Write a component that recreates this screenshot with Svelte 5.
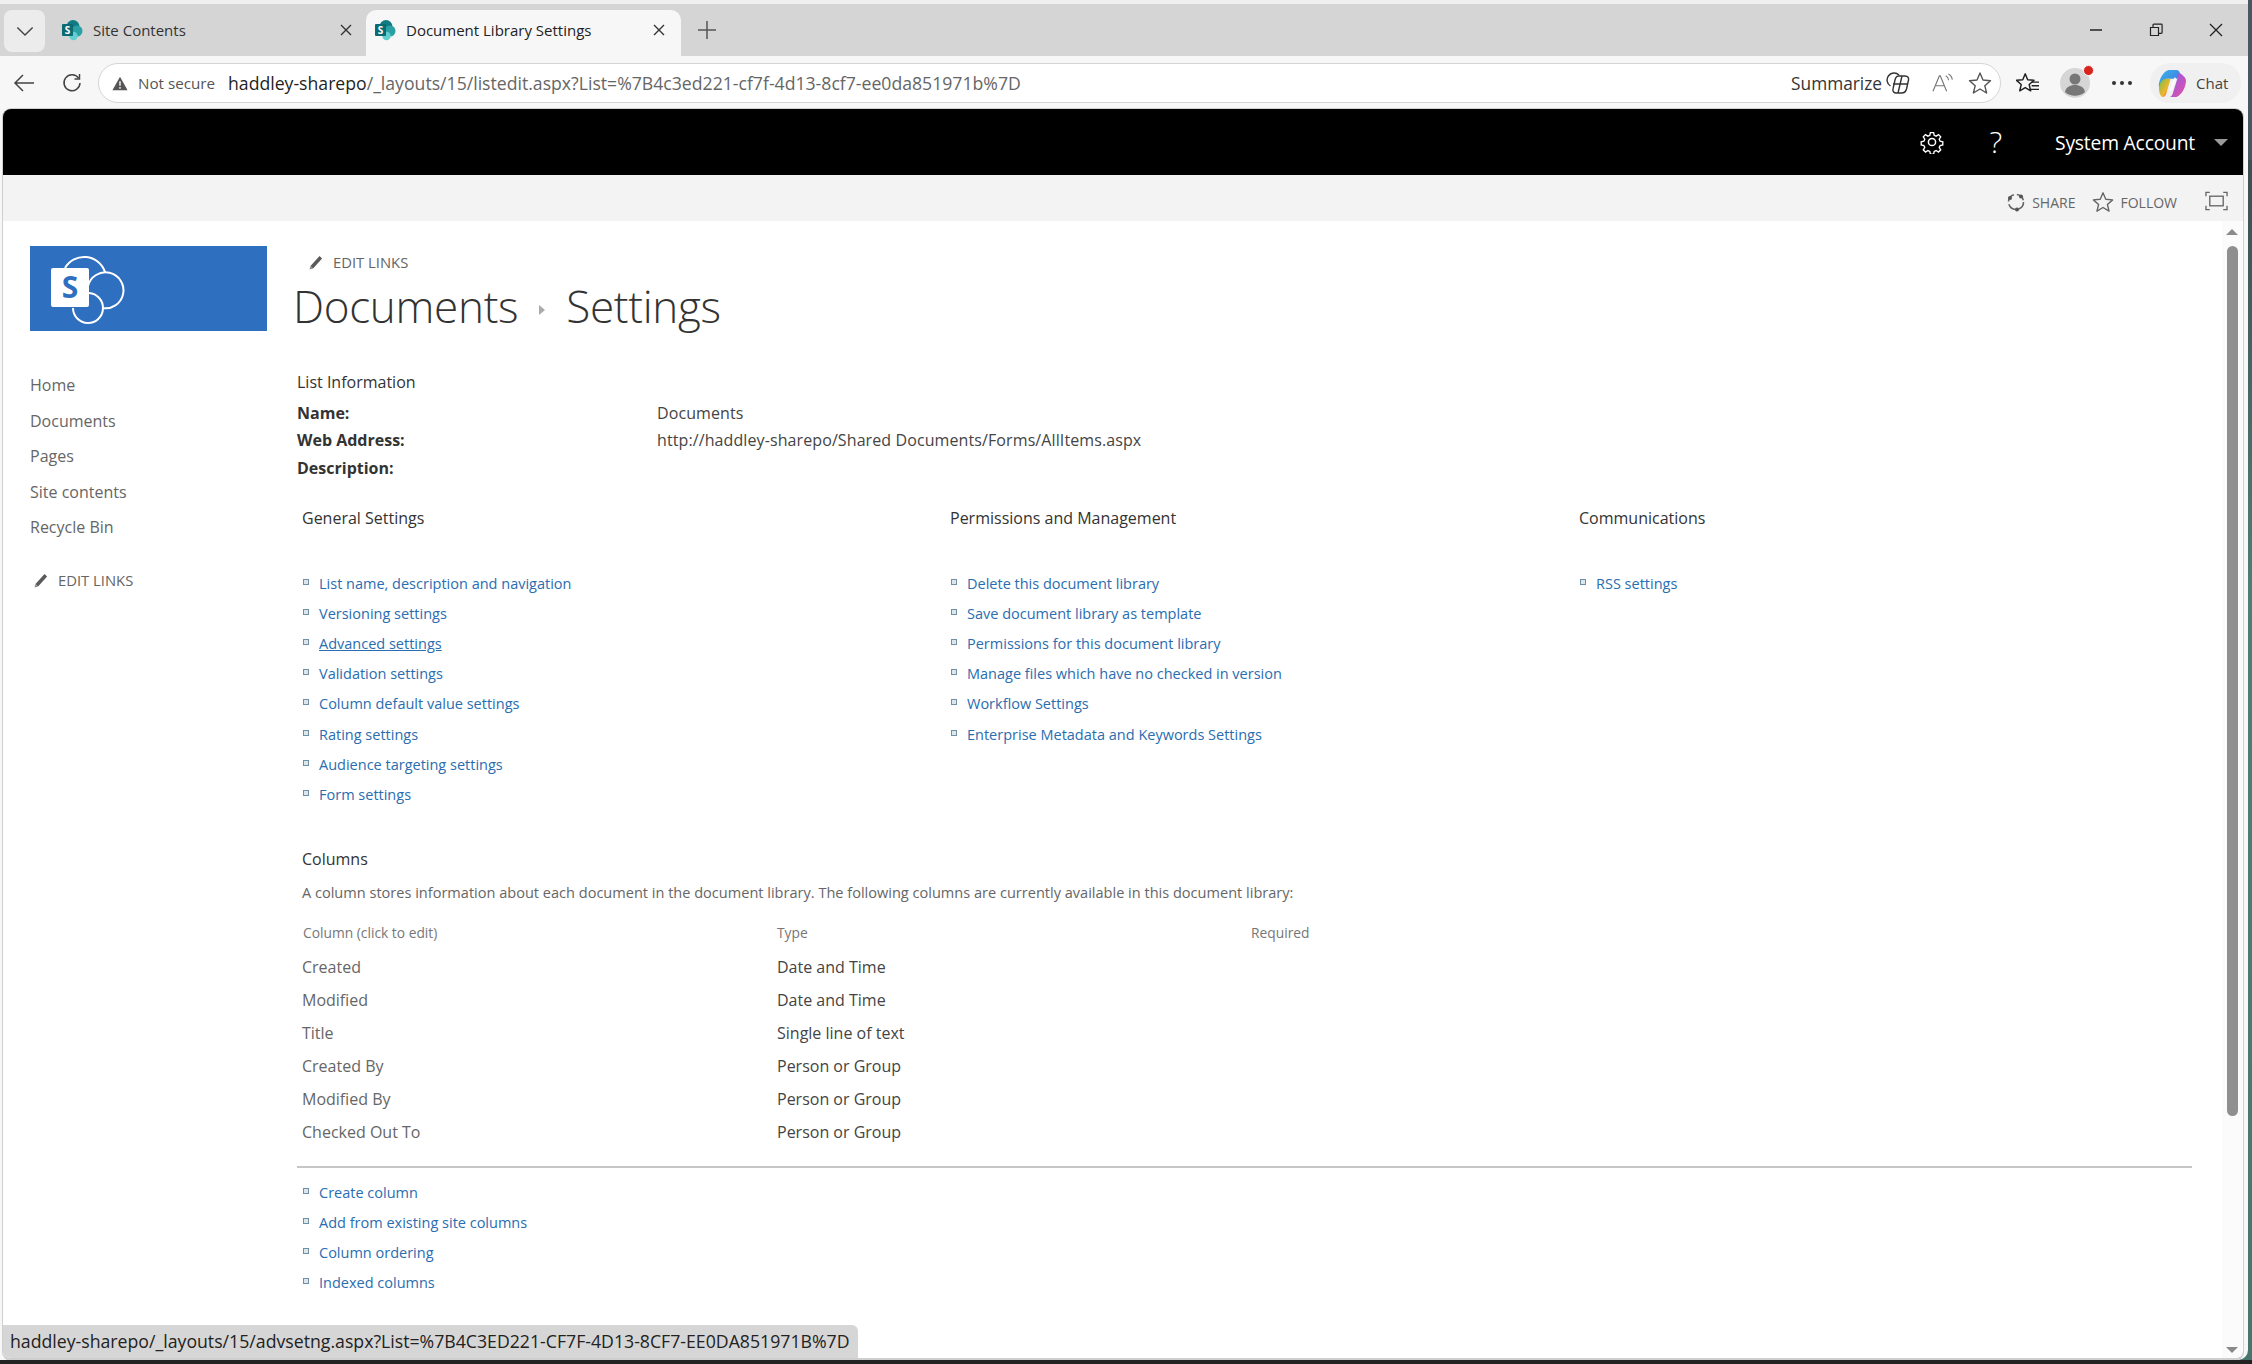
<script lang="ts">
  const navLinks = ['Home', 'Documents', 'Pages', 'Site contents', 'Recycle Bin'];

  const sections = [
    {
      title: 'General Settings',
      links: [
        'List name, description and navigation',
        'Versioning settings',
        'Advanced settings',
        'Validation settings',
        'Column default value settings',
        'Rating settings',
        'Audience targeting settings',
        'Form settings'
      ]
    },
    {
      title: 'Permissions and Management',
      links: [
        'Delete this document library',
        'Save document library as template',
        'Permissions for this document library',
        'Manage files which have no checked in version',
        'Workflow Settings',
        'Enterprise Metadata and Keywords Settings'
      ]
    },
    { title: 'Communications', links: ['RSS settings'] }
  ];

  const columns = [
    ['Created', 'Date and Time'],
    ['Modified', 'Date and Time'],
    ['Title', 'Single line of text'],
    ['Created By', 'Person or Group'],
    ['Modified By', 'Person or Group'],
    ['Checked Out To', 'Person or Group']
  ];

  const columnLinks = ['Create column', 'Add from existing site columns', 'Column ordering', 'Indexed columns'];
</script>

{#snippet favicon()}
  <svg class="favicon" viewBox="0 0 22 22" aria-hidden="true">
    <circle cx="12" cy="7.5" r="6.5" fill="#0f7b83" />
    <circle cx="16" cy="12" r="5.5" fill="#2aa0a4" />
    <circle cx="12.5" cy="17" r="4.2" fill="#5fcfd0" />
    <rect x="1" y="5" width="11" height="12" rx="1" fill="#0b6a72" />
    <text x="6.5" y="14.5" class="favicon__s">S</text>
  </svg>
{/snippet}

{#snippet pencil()}
  <svg class="pencil" viewBox="0 0 16 16" aria-hidden="true">
    <path d="M2.5 12l9-10 2.6 2.4-9 10z" fill="#5a5a5a" />
    <path d="M1.5 15.5l1-3.5 2.6 2.4z" fill="#8a8a8a" />
  </svg>
{/snippet}

{#snippet linkList(links: string[])}
  <ul class="links">
    {#each links as link}
      <li><a href="#top" class:hovered={link === 'Advanced settings'}>{link}</a></li>
    {/each}
  </ul>
{/snippet}

<div class="window">
  <header class="tabstrip">
    <button class="tabmenu" aria-label="Tab actions">
      <svg viewBox="0 0 20 12" width="18" height="11"><path d="M1.5 1.5L10 10l8.5-8.5" fill="none" stroke="#444" stroke-width="1.6" /></svg>
    </button>
    <div class="tab">
      {@render favicon()}
      <span class="tab__title">Site Contents</span>
      <svg class="tab__close" viewBox="0 0 12 12"><path d="M1 1l10 10M11 1L1 11" stroke="#333" stroke-width="1.4" /></svg>
    </div>
    <div class="tab tab--active">
      {@render favicon()}
      <span class="tab__title">Document Library Settings</span>
      <svg class="tab__close" viewBox="0 0 12 12"><path d="M1 1l10 10M11 1L1 11" stroke="#333" stroke-width="1.4" /></svg>
    </div>
    <svg class="newtab" viewBox="0 0 20 20"><path d="M10 1v18M1 10h18" stroke="#555" stroke-width="1.5" /></svg>
    <div class="winctl">
      <svg viewBox="0 0 14 14"><path d="M1 7h12" stroke="#222" stroke-width="1.4" /></svg>
      <svg viewBox="0 0 14 14"><path d="M1.5 4.5h8v8h-8z M4 4.5V2a.8.8 0 0 1 .8-.8h7.5a.8.8 0 0 1 .8.8v7.5a.8.8 0 0 1-.8.8H9.5" fill="none" stroke="#222" stroke-width="1.2" /></svg>
      <svg viewBox="0 0 14 14"><path d="M1 1l12 12M13 1L1 13" stroke="#222" stroke-width="1.3" /></svg>
    </div>
  </header>

  <div class="toolbar">
    <svg class="tool tool--back" viewBox="0 0 22 20"><path d="M21 10H2M10 2l-8 8 8 8" fill="none" stroke="#444" stroke-width="1.5" /></svg>
    <svg class="tool tool--reload" viewBox="0 0 20 20"><path d="M16.6 5.2A8 8 0 1 0 18 10" fill="none" stroke="#444" stroke-width="1.5" /><path d="M17.5 1v5h-5" fill="none" stroke="#444" stroke-width="1.5" /></svg>
    <div class="addressbar">
      <svg class="warn" viewBox="0 0 18 16"><path d="M9 0.5L17.5 15.5H0.5z" fill="#555" /><path d="M9 5.5v5M9 12v2" stroke="#f7f7f7" stroke-width="1.6" /></svg>
      <span class="notsecure">Not secure</span>
      <span class="url"><span class="url__host">haddley-sharepo</span>/_layouts/15/listedit.aspx?List=%7B4c3ed221-cf7f-4d13-8cf7-ee0da851971b%7D</span>
      <span class="summarize">Summarize</span>
      <svg class="addr-icon addr-icon--sum" viewBox="0 0 24 24"><g fill="none" stroke="#333" stroke-width="1.4"><path d="M4.5 15A7 7 0 1 1 13 4" /><path d="M12 5h7c3 0 4 2 3.5 4l-2 9c-.5 2-2 4-5 4h-5c-3 0-4-2-3.5-4l2-9c.5-2 1.5-4 3.5-4z" /><path d="M7 13h15M16 5l-4 17" /></g></svg>
      <svg class="addr-icon addr-icon--read" viewBox="0 0 24 22"><path d="M1 20L8 3h1l7 17M4 14h10" fill="none" stroke="#777" stroke-width="1.3" /><path d="M15 3c2 1 3 3 3.2 5M18 1c2.6 1.4 4 4 4.2 6.5" fill="none" stroke="#777" stroke-width="1.2" /></svg>
      <svg class="addr-icon addr-icon--star" viewBox="0 0 24 24"><path d="M12 2l3 7 7.5.7-5.7 5 1.8 7.3L12 18l-6.6 4 1.8-7.3-5.7-5L9 9z" fill="none" stroke="#555" stroke-width="1.4" stroke-linejoin="round" /></svg>
    </div>
    <svg class="tool tool--favs" viewBox="0 0 26 24"><path d="M10 2l2.6 6.5 6.9.6-5.2 4.6 1.6 6.8L10 17l-6 3.5 1.6-6.8L.5 9.1l6.8-.6z" fill="none" stroke="#222" stroke-width="1.6" stroke-linejoin="round" /><path d="M17 11h8M17 15h8M16 19h9" stroke="#222" stroke-width="1.5" /></svg>
    <div class="avatar">
      <svg viewBox="0 0 30 30"><circle cx="15" cy="15" r="15" fill="#d6d6d6" /><circle cx="15" cy="11" r="5.5" fill="#777" /><path d="M5 24c1-5 5-7 10-7s9 2 10 7a15 15 0 0 1-20 0z" fill="#777" /></svg>
      <span class="avatar__dot"></span>
    </div>
    <div class="dots"><i></i><i></i><i></i></div>
    <div class="chat">
      <svg viewBox="0 0 30 30">
        <defs>
          <linearGradient id="cpA" x1="0" y1="0" x2="1" y2="1"><stop offset="0" stop-color="#3bb6e8" /><stop offset="1" stop-color="#3f6fe0" /></linearGradient>
          <linearGradient id="cpB" x1="0" y1="0" x2="1" y2="1"><stop offset="0" stop-color="#6dc24b" /><stop offset="0.6" stop-color="#f2b52e" /><stop offset="1" stop-color="#e9483f" /></linearGradient>
          <linearGradient id="cpC" x1="0" y1="0" x2="1" y2="1"><stop offset="0" stop-color="#8a5cf0" /><stop offset="1" stop-color="#e64fa0" /></linearGradient>
        </defs>
        <path d="M11 1h8c2 0 3 1 3.6 3L20 10H9C7 10 2 17 1 19c-1-5 3-16 10-18z" fill="url(#cpA)" />
        <path d="M1 19c1-5 3-9 8-9h4l-4 14c-.5 3-2 5-4 5-3-1-4-5-4-10z" fill="url(#cpB)" />
        <path d="M22 4c3 2 7 5 7 8 0 6-4 15-10 17h-8c2 0 3-1 4-3l5-16c.5-3 1-6 2-6z" fill="url(#cpC)" />
        <path d="M18 9l-5 13" stroke="#fff" stroke-width="2" opacity="0.8" />
      </svg>
      <span>Chat</span>
    </div>
  </div>

  <div class="page">
    <div class="suitebar">
      <svg class="suite-gear" viewBox="0 0 24 24"><g fill="none" stroke="#fff" stroke-width="1.5"><circle cx="12" cy="12" r="3.6" /><path d="M10.2 1.5h3.6l.6 3 2.2 1 2.6-1.7 2.5 2.5-1.7 2.6 1 2.2 3 .6v3.6l-3 .6-1 2.2 1.7 2.6-2.5 2.5-2.6-1.7-2.2 1-.6 3h-3.6l-.6-3-2.2-1-2.6 1.7-2.5-2.5 1.7-2.6-1-2.2-3-.6v-3.6l3-.6 1-2.2-1.7-2.6 2.5-2.5 2.6 1.7 2.2-1z" transform="translate(1.2 1.2) scale(0.9)" /></g></svg>
      <span class="suite-help">?</span>
      <span class="suite-user">System Account</span>
      <span class="suite-caret"></span>
    </div>

    <div class="actionbar">
      <svg class="act-icon" viewBox="0 0 20 20"><circle cx="10" cy="10" r="7.5" fill="none" stroke="#666" stroke-width="1.6" stroke-dasharray="9 3" /><circle cx="4" cy="6" r="2" fill="#555" /><circle cx="15" cy="4.5" r="2" fill="#555" /><circle cx="11" cy="17.5" r="2" fill="#555" /></svg>
      <span class="act-label">SHARE</span>
      <svg class="act-icon act-icon--star" viewBox="0 0 24 24"><path d="M12 2l3 7 7.5.7-5.7 5 1.8 7.3L12 18l-6.6 4 1.8-7.3-5.7-5L9 9z" fill="none" stroke="#666" stroke-width="1.5" stroke-linejoin="round" /></svg>
      <span class="act-label">FOLLOW</span>
      <svg class="act-focus" viewBox="0 0 24 20"><path d="M1 5V1h4M19 1h4v4M23 15v4h-4M5 19H1v-4" fill="none" stroke="#666" stroke-width="1.4" /><rect x="5" y="5" width="14" height="10" fill="none" stroke="#666" stroke-width="1.4" /></svg>
    </div>

    <div class="body">
      <div class="scrollarea">
        <aside class="sidebar">
          <div class="logo">
            <svg viewBox="0 0 237 85" width="237" height="85">
              <g fill="none" stroke="#fff" stroke-width="2">
                <path d="M35 22A22 22 0 0 1 75 26" />
                <path d="M58 40A18 18 0 1 1 72 62" />
                <path d="M59 47A15 15 0 1 1 43 62" />
              </g>
              <rect x="21" y="22" width="38" height="39" rx="2" fill="#fff" />
              <text x="40" y="52" class="logo__s">S</text>
            </svg>
          </div>
          <nav class="quicklaunch">
            {#each navLinks as item}
              <span class="quicklaunch__item">{item}</span>
            {/each}
          </nav>
          <div class="editlinks editlinks--nav">{@render pencil()}<span>EDIT LINKS</span></div>
        </aside>

        <main class="main">
          <div class="editlinks editlinks--top">{@render pencil()}<span>EDIT LINKS</span></div>
          <h1 class="pagetitle">
            <span>Documents</span>
            <svg class="crumb" viewBox="0 0 6 10"><path d="M0 0l6 5-6 5z" fill="#aaa" /></svg>
            <span>Settings</span>
          </h1>

          <section class="info">
            <h2 class="info__title">List Information</h2>
            <dl class="info__grid">
              <dt>Name:</dt><dd>Documents</dd>
              <dt>Web Address:</dt><dd>http://haddley-sharepo/Shared Documents/Forms/AllItems.aspx</dd>
              <dt>Description:</dt><dd></dd>
            </dl>
          </section>

          <section class="settings">
            {#each sections as section}
              <div class="settings__col">
                <h3 class="heading">{section.title}</h3>
                {@render linkList(section.links)}
              </div>
            {/each}
          </section>

          <section class="cols">
            <h3 class="heading">Columns</h3>
            <p class="cols__desc">A column stores information about each document in the document library. The following columns are currently available in this document library:</p>
            <div class="cols__table">
              <div class="cols__head"><span>Column (click to edit)</span><span>Type</span><span>Required</span></div>
              {#each columns as [name, type]}
                <div class="cols__row"><span class="cols__name">{name}</span><span class="cols__type">{type}</span><span></span></div>
              {/each}
            </div>
          </section>

          <hr class="rule" />
          <div class="footlinks">{@render linkList(columnLinks)}</div>
        </main>
      </div>

      <div class="scrollbar">
        <span class="arrow arrow--up"></span>
        <span class="thumb"></span>
        <span class="arrow arrow--down"></span>
      </div>

      <div class="statusbubble">haddley-sharepo/_layouts/15/advsetng.aspx?List=%7B4C3ED221-CF7F-4D13-8CF7-EE0DA851971B%7D</div>
    </div>
  </div>
</div>

<style>
  :global(body) {
    margin: 0;
    background: linear-gradient(#4a5660 0 160px, #3e4d52 160px, #4f7f74 600px, #48756c 1360px, #222 1360px);
    height: 1364px;
    overflow: hidden;
    font-family: "Open Sans", "Liberation Sans", sans-serif;
  }

  .window {
    width: 2248px;
    height: 1360px;
    display: flex;
    flex-direction: column;
    background: #f7f7f7;
    border-top: 4px solid #efefef;
    box-sizing: border-box;
    border-bottom-right-radius: 10px;
    overflow: hidden;
  }

  /* browser chrome */
  .tabstrip {
    height: 52px;
    flex: none;
    display: flex;
    align-items: flex-end;
    background: #d5d5d5;
    position: relative;
  }
  .tabmenu {
    width: 41px;
    height: 42px;
    margin: 0 0 4px 4px;
    padding: 0;
    border: 0;
    border-radius: 8px;
    background: #ececec;
    display: flex;
    align-items: center;
    justify-content: center;
  }
  .tab {
    width: 315px;
    height: 46px;
    padding: 0 8px 6px 16px;
    box-sizing: border-box;
    display: flex;
    align-items: center;
    gap: 10px;
    font-size: 15px;
    color: #333;
    border-radius: 10px 10px 0 0;
  }
  .tab--active {
    background: #f7f7f7;
    margin-left: 6px;
    padding-left: 8px;
    padding-right: 16px;
    color: #222;
  }
  .tab__title {
    flex: 1;
    white-space: nowrap;
  }
  .tab__close {
    width: 12px;
    height: 12px;
    flex: none;
  }
  .favicon {
    width: 22px;
    height: 22px;
    flex: none;
  }
  .favicon__s {
    font: 700 10px "Open Sans", sans-serif;
    fill: #fff;
    text-anchor: middle;
  }
  .newtab {
    width: 20px;
    height: 20px;
    flex: none;
    margin: 0 0 16px 16px;
  }
  .winctl {
    margin-left: auto;
    height: 100%;
    display: flex;
    align-items: center;
    gap: 46px;
    padding: 0 25px 0 0;
  }
  .winctl svg {
    width: 14px;
    height: 14px;
  }

  .toolbar {
    height: 53px;
    flex: none;
    display: flex;
    align-items: center;
    background: #f7f7f7;
    padding: 1px 0 0 0;
    box-sizing: border-box;
  }
  .tool {
    flex: none;
  }
  .tool--back {
    width: 22px;
    height: 20px;
    margin-left: 13px;
  }
  .tool--reload {
    width: 20px;
    height: 20px;
    margin-left: 27px;
  }
  .addressbar {
    width: 1903px;
    height: 40px;
    margin-left: 16px;
    flex: none;
    display: flex;
    align-items: center;
    box-sizing: border-box;
    padding: 0 8px 0 13px;
    background: #fff;
    border: 1px solid #d4d4d4;
    border-radius: 20px;
  }
  .warn {
    width: 16px;
    height: 15px;
    flex: none;
  }
  .notsecure {
    margin-left: 10px;
    font-size: 15.2px;
    color: #555;
    white-space: nowrap;
  }
  .url {
    margin-left: 13px;
    font-size: 17.65px;
    color: #666;
    white-space: nowrap;
  }
  .url__host {
    color: #1f1f1f;
  }
  .summarize {
    margin-left: auto;
    font-size: 17.3px;
    color: #333;
  }
  .addr-icon {
    flex: none;
  }
  .addr-icon--sum {
    width: 24px;
    height: 24px;
    margin-left: 4px;
  }
  .addr-icon--read {
    width: 22px;
    height: 20px;
    margin-left: 22px;
  }
  .addr-icon--star {
    width: 24px;
    height: 24px;
    margin-left: 14px;
  }
  .tool--favs {
    width: 24px;
    height: 22px;
    margin-left: 15px;
  }
  .avatar {
    position: relative;
    width: 30px;
    height: 30px;
    flex: none;
    margin-left: 20px;
  }
  .avatar svg {
    width: 30px;
    height: 30px;
    display: block;
  }
  .avatar__dot {
    position: absolute;
    top: -3px;
    right: -4px;
    width: 9px;
    height: 9px;
    border-radius: 50%;
    background: #d8241c;
    border: 1px solid #f7f7f7;
  }
  .dots {
    display: flex;
    flex: none;
    gap: 4px;
    margin-left: 22px;
  }
  .dots i {
    width: 4px;
    height: 4px;
    border-radius: 50%;
    background: #333;
  }
  .chat {
    margin-left: 18px;
    width: 91px;
    height: 40px;
    flex: none;
    padding-left: 8px;
    box-sizing: border-box;
    display: flex;
    align-items: center;
    gap: 9px;
    font-size: 15px;
    color: #444;
    background: #f0f0f0;
    border-radius: 20px;
  }
  .chat svg {
    width: 29px;
    height: 29px;
    flex: none;
  }

  /* sharepoint page */
  .page {
    flex: 1;
    min-height: 0;
    display: flex;
    flex-direction: column;
    margin: 0 5px 0 3px;
    background: #fff;
    border-radius: 8px 8px 8px 8px;
    border-bottom: 2px solid #cfcfcf;
    box-shadow: 0 0 0 1px #cfcfcf;
    overflow: hidden;
  }
  .suitebar {
    height: 66px;
    flex: none;
    display: flex;
    align-items: center;
    background: #000;
    color: #fff;
    padding-right: 15px;
  }
  .suite-gear {
    width: 24px;
    height: 24px;
    margin-left: auto;
  }
  .suite-help {
    margin-left: 45px;
    font-size: 30px;
    font-weight: 300;
    line-height: 1;
  }
  .suite-user {
    margin-left: 53px;
    font-size: 19.3px;
    letter-spacing: -0.2px;
  }
  .suite-caret {
    margin-left: 19px;
    border-left: 7px solid transparent;
    border-right: 7px solid transparent;
    border-top: 7px solid #9a9a9a;
  }
  .actionbar {
    height: 46px;
    flex: none;
    display: flex;
    align-items: center;
    justify-content: flex-end;
    background: #f3f3f3;
    padding: 8px 15px 0 0;
    box-sizing: border-box;
    font-size: 14px;
    color: #666;
  }
  .act-icon {
    width: 20px;
    height: 20px;
  }
  .act-icon--star {
    width: 22px;
    height: 22px;
    margin-left: 17px;
  }
  .act-label {
    margin-left: 6px;
  }
  .act-focus {
    width: 23px;
    height: 20px;
    margin-left: 28px;
    margin-bottom: 2px;
  }

  .body {
    flex: 1;
    min-height: 0;
    display: flex;
    position: relative;
  }
  .scrollarea {
    flex: 1;
    min-width: 0;
    display: flex;
  }
  .sidebar {
    width: 294px;
    flex: none;
    padding: 25px 0 0 27px;
    box-sizing: border-box;
  }
  .logo {
    width: 237px;
    height: 85px;
    background: #2f6fbf;
  }
  .logo svg {
    display: block;
  }
  .logo__s {
    font: 700 30px "Open Sans", sans-serif;
    fill: #2f6fbf;
    text-anchor: middle;
  }
  .quicklaunch {
    margin-top: 37px;
    display: flex;
    flex-direction: column;
  }
  .quicklaunch__item {
    height: 35.5px;
    line-height: 35.5px;
    font-size: 16px;
    color: #666;
  }
  .editlinks {
    display: flex;
    align-items: center;
    gap: 9px;
    font-size: 14.8px;
    color: #666;
  }
  .editlinks--nav {
    margin-top: 24px;
    height: 20px;
    padding-left: 3px;
  }
  .editlinks--top {
    height: 20px;
    margin: 31px 0 0 11px;
  }
  .pencil {
    width: 16px;
    height: 16px;
  }

  .main {
    flex: 1;
    min-width: 0;
  }
  .pagetitle {
    margin: 1px 0 0 -4px;
    display: flex;
    align-items: center;
    gap: 21px;
    height: 66px;
    font-size: 44px;
    font-weight: 300;
    color: #333;
    letter-spacing: -0.3px;
  }
  .crumb {
    width: 6px;
    height: 10px;
    margin-top: 8px;
  }
  .info {
    margin-top: 30px;
  }
  .info__title {
    margin: 0;
    font-size: 16px;
    font-weight: 400;
    color: #333;
    line-height: 26px;
  }
  .info__grid {
    margin: 5px 0 0;
    display: grid;
    grid-template-columns: 360px 1fr;
    grid-auto-rows: 27.3px;
    line-height: 27.3px;
    font-size: 16px;
  }
  .info__grid dt {
    font-weight: 700;
    color: #333;
  }
  .info__grid dd {
    margin: 0;
    color: #444;
    letter-spacing: 0.1px;
  }
  .settings {
    margin: 23px 0 0 5px;
    display: flex;
  }
  .settings__col:nth-child(1) {
    width: 648px;
  }
  .settings__col:nth-child(2) {
    width: 629px;
  }
  .heading {
    margin: 0;
    font-size: 16px;
    font-weight: 400;
    color: #333;
    line-height: 26px;
  }
  .links {
    list-style: none;
    margin: 38px 0 0;
    padding: 0;
  }
  .links li {
    height: 30.15px;
    line-height: 30.15px;
    font-size: 14.5px;
    padding-left: 17px;
    position: relative;
  }
  .links li::before {
    content: "";
    position: absolute;
    left: 1px;
    top: 10px;
    width: 4px;
    height: 4px;
    border: 1px solid #6d8fa8;
    background: #dfe6ea;
  }
  .links a {
    color: #2a6db0;
    text-decoration: none;
  }
  .links a.hovered {
    text-decoration: underline;
  }
  .cols {
    margin: 36px 0 0 5px;
  }
  .cols__desc {
    margin: 7px 0 0;
    font-size: 14.55px;
    color: #666;
    line-height: 26px;
  }
  .cols__table {
    margin-top: 15px;
  }
  .cols__head,
  .cols__row {
    display: grid;
    grid-template-columns: 475px 474px 1fr;
  }
  .cols__head {
    height: 26px;
    line-height: 26px;
    font-size: 13.8px;
    color: #777;
    padding-left: 1px;
    margin-bottom: 5px;
  }
  .cols__head span:nth-child(n + 2) {
    margin-left: -1px;
  }
  .cols__row {
    height: 33px;
    line-height: 33px;
    font-size: 16px;
  }
  .cols__name {
    color: #666;
  }
  .cols__type {
    color: #444;
  }
  .rule {
    margin: 17px 0 0;
    width: 1895px;
    border: 0;
    border-top: 2px solid #c6c6c6;
  }
  .footlinks {
    margin-left: 5px;
    padding-top: 10px;
  }
  .footlinks .links {
    margin-top: 0;
  }

  .scrollbar {
    width: 20px;
    flex: none;
    position: relative;
    background: #fbfbfb;
    display: flex;
    flex-direction: column;
    align-items: center;
    padding: 8px 0 5px;
    box-sizing: border-box;
    margin-right: 1px;
  }
  .arrow {
    flex: none;
    border-left: 6px solid transparent;
    border-right: 6px solid transparent;
  }
  .arrow--up {
    border-bottom: 6px solid #8a8a8a;
  }
  .arrow--down {
    margin-top: auto;
    border-top: 6px solid #8a8a8a;
  }
  .thumb {
    width: 11px;
    height: 870px;
    margin-top: 11px;
    border-radius: 6px;
    background: #8f8f8f;
  }
  .statusbubble {
    position: absolute;
    left: -3px;
    bottom: 0;
    height: 33px;
    line-height: 33px;
    width: 858px;
    box-sizing: border-box;
    padding-left: 10px;
    font-size: 17.7px;
    white-space: nowrap;
    color: #222;
    background: #d6d6d6;
    border-top-right-radius: 6px;
  }
</style>
